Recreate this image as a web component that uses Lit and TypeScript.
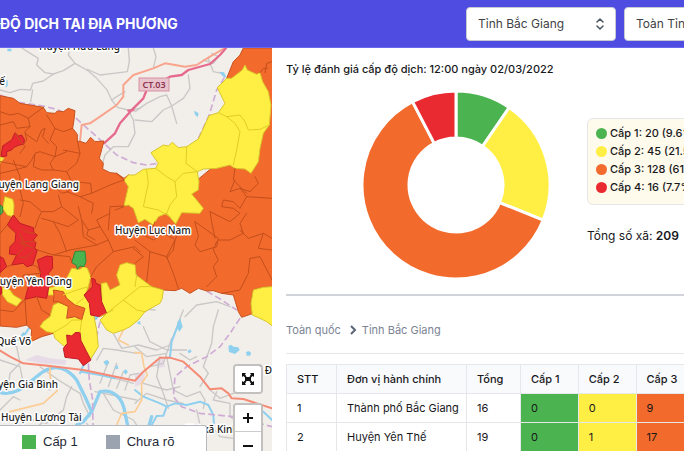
import { LitElement, html, svg, css } from "lit";
import { customElement, property } from "lit/decorators.js";

const GREEN = "#4bb350";
const YELLOW = "#ffef45";
const ORANGE = "#f26b2d";
const RED = "#ea2a31";

interface Level { name: string; count: number; share: string; color: string; }

const LEVELS: Level[] = [
  { name: "Cấp 1", count: 20, share: "9.6%", color: GREEN },
  { name: "Cấp 2", count: 45, share: "21.5%", color: YELLOW },
  { name: "Cấp 3", count: 128, share: "61.2%", color: ORANGE },
  { name: "Cấp 4", count: 16, share: "7.7%", color: RED },
];

const ROWS = [
  { name: "Thành phố Bắc Giang", total: 16, levels: [0, 0, 9, 7] },
  { name: "Huyện Yên Thế", total: 19, levels: [0, 1, 17, 1] },
];

/* Map geometry is kept at three units per pixel. */
const MINOR_ROADS = [
  "M40 295 M0 270 L30 278 L60 268 L92 270 L98 250 L130 243 L160 222 L190 212 L225 190 L265 213 L290 235 L320 268 L335 300 L352 322 L385 330 L420 325",
  "M160 222 L135 218 L110 195 L115 175 L65 144",
  "M98 270 L92 305 M225 190 L205 165 L210 144",
  "M385 144 L388 185 L382 215 L340 220 L300 225 L262 208",
  "M335 300 L350 290 L375 275 M385 330 L400 360 L405 400 L385 440 L340 440 L315 465 L308 490",
  "M405 360 L455 365 L490 330 L515 318 L550 295 L570 265 L565 225 M405 335 L440 310 L480 290 L500 285 L515 318 L530 370",
  "M460 144 L468 170 L460 205 M610 180 L640 190 L655 170 L635 160 M625 175 L640 215 L665 220",
  "M435 935 L445 928 L465 930 M555 950 L590 915 L650 905 L690 920",
  "M0 1010 L50 1040 L60 1090 L30 1120 L25 1160 M120 1100 L175 1140 L240 1180 L250 1210 L270 1250",
  "M215 1160 L200 1190 L190 1230 L140 1270 L100 1260",
  "M0 1080 L60 1100 L70 1150 L120 1145 L150 1170 M0 1230 L40 1190 L60 1200",
  "M290 1080 L310 1045 L350 1050 L410 1060 M300 1150 L325 1085 M325 1160 L350 1090 M350 1165 L370 1115 M375 1170 L390 1125 L415 1120 M310 1125 L400 1150 M285 1175 L410 1200",
  "M340 1000 L365 1045 L415 1035 L470 1050 L510 1035 L540 955 L550 930",
  "M430 980 L450 1025 L500 1050 L560 1050 M405 1040 L440 1070 L500 1060 M450 1100 L490 1090 L515 1015",
  "M540 1060 L570 1080 L590 1070 M655 930 L640 980 L635 1030 L610 1100 L625 1120 L600 1160",
  "M480 1070 L470 1130 L490 1180 L505 1225 M500 1070 L520 1170 L560 1190 L600 1175 L615 1200 L610 1225 M430 1150 L500 1170 L540 1160",
  "M405 1210 L440 1180 L500 1200 L550 1210 M630 1170 L660 1195 L700 1180 L740 1155 M650 1175 L640 1200 L690 1210 L690 1250 L720 1270",
  "M590 1230 L600 1275 L570 1290 L550 1353 M640 1285 L660 1310 L700 1315 M310 1180 L340 1230 L400 1260 L420 1290 L480 1300",
  "M260 1270 L300 1320 L360 1330 M30 1290 L90 1300 L130 1265",
];

const RIVERS_WIDE = [
  "M0 1178 C60 1190 90 1140 130 1115 S205 1108 230 1140 L255 1190 L275 1235 L250 1265 L230 1275",
  "M275 1235 L300 1175 C345 1165 370 1200 375 1240 L385 1285 L440 1300 L455 1250",
];

const RIVERS = [
  "M240 1120 L248 1100 L275 1070 L290 1040 L285 980 L278 950",
  "M455 1275 L470 1248 L490 1247 L500 1220 L525 1210 L560 1215 L600 1205 L625 1215 L640 1245 L642 1275",
  "M245 1115 L300 1125 L345 1135 M405 1170 L430 1190 L480 1210 L500 1220",
  "M510 1070 L515 1025 L540 960 M760 1225 L790 1235 L816 1260 M70 1010 L90 980 M55 1020 L70 1000",
];

const PONDS = [
  "M685 1038 l8 -4 l8 6 l14 2 l4 8 l-14 12 l-18 -6z", "M738 1056 l8 -3 l8 6 l-4 8 l-10 0z",
  "M563 1052 l8 -4 l4 8 l-10 4z", "M582 332 l8 4 l6 4 l-3 12 l-8 -8z M658 215 l14 2 l8 16 l-12 -4z",
  "M532 965 l10 -4 l6 20 l-10 14 l-6 -10z", "M310 1085 l12 -6 l6 10 l-10 8z M345 1100 l8 -4 l2 10 l-8 2z M370 1112 l8 -4 l6 8 l-8 8z",
  "M22 146 h12 v8 h-12z M15 245 l8 -6 v18 l-6 6z M410 970 l10 -8 l2 12z M270 950 l15 -12 l12 12 l-8 10 h-15z",
];

const AREAS: { color: string; d: string }[] = [
  {
    color: ORANGE,
    d: "M0 287 L40 295 L60 310 L130 322 L140 338 L165 340 L172 333 L190 335 L205 325 L225 332 L222 360 L218 385 L232 403 L232 423 L243 425 L258 430 L272 412 L285 425 L312 423 L298 475 L310 490 L308 507 L330 518 L350 520 L372 535 L385 525 L520 600 L700 450 L740 300 L680 235 L700 185 L720 165 L730 144 H820 V862 L790 862 L760 870 L753 910 L760 940 L725 952 L715 935 L700 885 L665 880 L640 872 L620 873 L595 865 L570 880 L545 865 L525 872 L490 870 L455 860 L420 835 L400 810 L360 855 L330 870 L300 900 L200 990 L160 1000 L125 1010 L92 1025 L95 990 L80 975 L50 982 L0 978 Z",
  },
  {
    color: YELLOW,
    d: "M385 525 L405 525 L430 508 L467 505 L475 490 L453 458 L490 435 L505 438 L517 427 L535 443 L560 440 L595 417 L610 385 L627 347 L655 338 L675 310 L652 263 L680 235 L695 235 L727 210 L735 195 L742 210 L770 223 L780 218 L788 245 L805 275 L813 315 L808 375 L790 400 L780 445 L775 485 L753 520 L735 507 L705 505 L690 495 L650 505 L610 507 L592 515 L597 545 L595 570 L575 582 L610 625 L600 640 L545 638 L527 672 L510 652 L500 640 L475 650 L460 675 L435 658 L415 668 L400 625 L385 615 L372 618 L385 560 L372 540 Z",
  },
  {
    color: YELLOW,
    d: "M145 865 L170 858 L195 845 L215 805 L240 808 L250 800 L262 805 L272 830 L265 860 L255 885 L280 910 L282 950 L290 990 L295 1040 L270 1080 L235 1060 L200 1045 L165 1015 L160 998 L140 995 L120 980 L130 965 L150 950 L160 915 L175 908 L200 915 L195 905 L190 885 L145 885 Z",
  },
  { color: ORANGE, d: "M160 870 L190 875 L200 895 L225 915 L255 925 L245 960 L225 950 L200 955 L205 920 L175 905 L160 905 L162 885 Z" },
  {
    color: YELLOW,
    d: "M305 850 L320 848 L330 870 L360 855 L350 825 L360 795 L380 788 L405 795 L408 825 L455 860 L490 870 L487 895 L480 910 L465 918 L435 935 L415 960 L390 980 L370 990 L340 1000 L320 990 L300 960 L320 940 L305 905 Z",
  },
  { color: YELLOW, d: "M760 870 L790 862 L820 860 V980 L800 965 L780 955 L757 945 L753 910 Z" },
  { color: YELLOW, d: "M15 590 L38 598 L42 615 L40 650 L22 645 L8 625 Z M0 470 L12 475 L0 490 Z" },
  { color: YELLOW, d: "M5 860 L30 870 L40 885 L65 900 L50 918 L22 905 L8 885 Z" },
  { color: GREEN, d: "M0 615 L8 620 L8 638 L0 645 Z" },
  { color: GREEN, d: "M225 755 L238 753 L255 754 L258 785 L252 800 L240 798 L232 808 L228 795 L215 788 Z" },
  { color: RED, d: "M45 398 L55 408 L65 405 L73 418 L72 432 L55 436 L42 442 L35 450 L20 455 L20 468 L3 470 L8 438 L35 420 Z" },
  { color: RED, d: "M40 645 L60 670 L100 683 L102 698 L112 705 L100 720 L108 728 L104 745 L112 750 L98 795 L80 800 L70 790 L35 795 L50 765 L28 762 L30 740 L45 725 L48 700 L22 675 Z" },
  { color: RED, d: "M112 780 L140 768 L157 770 L158 805 L145 820 L150 840 L140 895 L110 890 L75 898 L85 860 L120 845 L122 820 Z" },
  { color: RED, d: "M0 770 L10 775 L20 800 L0 818 Z M0 860 L5 862 L5 880 L0 885 Z" },
  { color: RED, d: "M275 835 L285 838 L288 850 L300 855 L305 905 L320 940 L300 950 L272 945 L268 910 L252 885 L278 860 Z" },
  { color: RED, d: "M200 1005 L215 1008 L225 998 L240 997 L243 1022 L260 1055 L273 1080 L250 1097 L235 1077 L195 1072 L190 1045 L202 1030 Z" },
];

const ORANGE_BORDERS = [
  "M0 335 L30 345 L55 340 L85 355 L130 322 M85 355 L90 380 L50 385 L40 365 L0 375 M90 380 L75 395 L80 420 L72 430",
  "M218 385 L190 395 L165 385 L140 345 M165 385 L150 420 L170 440 L165 470 L120 455 L105 460 L95 480 L80 500 L0 485",
  "M75 400 L110 425 L125 390 L135 385 L128 410 L145 430 M165 470 L150 490 L160 510 L125 510 L100 500 L105 465 M0 520 L45 510 L80 500",
  "M160 510 L200 515 L230 490 L240 460 L232 423 M200 515 L215 545 L205 575 L185 580 L170 565 M60 600 L90 605 L125 635 L115 655 L105 685",
  "M45 400 L75 440 L60 460 M40 480 L60 530 L58 560 M190 450 L215 455 L240 460 M165 470 L200 455",
  "M215 545 L272 550 L275 580 L240 590 L200 575 M240 590 L280 610 L275 640 M372 540 L330 555 L275 580 M350 520 L372 540",
  "M58 560 L70 610 L60 650 M125 635 L160 635 L185 620 L175 585 M185 620 L235 660 L205 680 L160 665 L125 655",
  "M160 665 L180 700 L200 755 M235 620 L245 660 L250 710 L290 735 L210 750 M210 750 L160 765",
  "M245 660 L265 690 L300 680 L325 720 L290 735 M325 720 L340 755 L290 800 L272 830 M325 690 L330 620 L372 618",
  "M300 680 L290 660 L330 640 M265 690 L260 705 L285 720 M340 755 L405 740 L420 755 M372 620 L345 630",
  "M112 750 L160 765 L210 770 L215 788 M0 700 L22 675 M35 795 L20 800 M98 795 L112 800 L122 820 L70 825 L60 860",
  "M405 720 L450 755 L445 800 L440 845 M450 755 L500 770 L525 720 L540 690 M500 770 L520 820 L535 865 M400 745 L430 770 L405 790",
  "M430 705 L460 720 L490 700 L520 715 M465 665 L455 690 L430 705 M525 720 L520 750 L500 775",
  "M585 665 L620 690 L655 715 L650 740 L600 755 L585 735 L595 710 Z M630 635 L635 665 L645 715 M650 725 L640 750 L655 780 L640 800 L650 830 L620 860",
  "M630 635 L660 650 L690 665 L720 640 L700 625 L665 620 L670 600 L700 605 L720 625 L740 590 L720 565 L690 575 L705 540",
  "M740 590 L816 595 M720 565 L750 575 L775 550 L765 530 M705 505 L700 540 L740 580 M655 720 L690 720 L730 700 L720 670 L740 640",
  "M720 690 L745 715 L790 700 L816 715 M750 775 L780 770 L816 840 M750 775 L745 820 L720 870 L665 880 M790 700 L775 745 L816 750",
  "M0 930 L40 935 L75 898 M75 898 L80 975 M110 890 L125 930 L150 945 M795 218 L800 190 L816 185 M780 218 L790 205 L802 205",
  "M105 725 L70 725 L60 700 M50 765 L75 740 L60 725 L100 745 M65 685 L75 695 L105 700 M60 770 L75 775 L98 755",
];

const YELLOW_BORDERS = [
  "M560 440 L558 490 L592 515 M655 338 L680 350 L705 370 L720 395 L710 450 L700 495 M680 350 L720 345 L735 365 L745 390 L780 388 L808 375",
  "M467 505 L500 530 L525 545 L550 520 L592 515 M440 510 L445 550 L430 620 L475 630 L510 650 M525 545 L530 590 L510 615 L500 640",
  "M190 885 L230 870 L265 860 M225 915 L250 895 M160 998 L200 975 L215 960 L245 960 L240 997 M320 940 L370 900 L420 860 L455 860 M370 900 L410 930 L435 935 M410 825 L405 860 M300 950 L340 930",
];

const MAP_LABELS = [
  { text: "Huyện Hữu Lũng", x: 39, y: 50, anchor: "start" },
  { text: "Huyện Yên Thế", x: 5, y: 85, anchor: "end" },
  { text: "Huyện Lạng Giang", x: 79, y: 188, anchor: "end" },
  { text: "Huyện Lục Nam", x: 115, y: 234, anchor: "start" },
  { text: "Huyện Yên Dũng", x: 72, y: 285, anchor: "end" },
  { text: "Thị xã Quế Võ", x: 31, y: 345, anchor: "end" },
  { text: "Huyện Gia Bình", x: 58, y: 388, anchor: "end" },
  { text: "Huyện Lương Tài", x: 1, y: 421, anchor: "start" },
  { text: "Thị xã Kinh", x: 186, y: 433, anchor: "start" },
  { text: "xã Đ", x: 272, y: 374, anchor: "end" },
];

@customElement("region-map")
export class RegionMap extends LitElement {
  static styles = css`
    :host { display: block; position: relative; overflow: hidden; background: #f2efeb; }
    .map { position: absolute; inset: 0; width: 100%; height: 100%; display: block; }
    .line { fill: none; stroke-linejoin: round; stroke-linecap: round; }
    .minor { stroke: #c9c8c6; stroke-width: 4; }
    .river { stroke: #8fd0ef; stroke-width: 6; }
    .wide { stroke: #8fd0ef; stroke-width: 10; }
    .pond { fill: #8fd0ef; }
    .boundary { stroke: #cfabd6; stroke-width: 5; stroke-dasharray: 20 10; stroke-linecap: butt; }
    .primary { stroke: #f9a48c; stroke-width: 6; }
    .trunk { stroke: #f58a75; stroke-width: 6; }
    .secondary { stroke: #fbcd95; stroke-width: 5; }
    .motorway { stroke: #e66a8c; stroke-width: 7; }
    .town { fill: #e6dbe6; }
    .area { stroke-width: 3; stroke-linejoin: round; }
    .on-orange { stroke: #c34d1b; stroke-width: 3; }
    .on-yellow { stroke: #dfcb25; stroke-width: 3; }
    .shield { fill: #e9c4cd; stroke: #d792a4; stroke-width: 1; }
    .shield-text { font: 600 9px "Noto Sans", sans-serif; fill: #8c3350; }
    .label {
      font: 500 10px "Noto Sans", sans-serif; fill: #1c1c1c;
      stroke: #fff; stroke-width: 3px; stroke-linejoin: round; paint-order: stroke;
    }
    .legend {
      position: absolute; left: 0; bottom: 0; width: 207px; box-sizing: border-box;
      display: flex; gap: 28px; padding: 8px 0 1px 22px; background: #fff;
      border-top: 1px solid #b5b8c0; border-right: 1px solid #b5b8c0; border-top-right-radius: 3px;
      font: 13px/16px "Liberation Sans", sans-serif; color: #1f2937;
    }
    .entry { display: flex; align-items: center; gap: 7px; }
    .swatch { width: 14px; height: 14px; }
    .cap1 { background: #4bb350; }
    .unknown { background: #9ca3b0; }
    .controls { position: absolute; right: 9px; bottom: -10px; display: grid; gap: 9px; }
    .box { border: 2px solid #c3c1bf; border-radius: 4px; overflow: hidden; background: #fff; }
    button {
      display: grid; place-items: center; width: 26px; height: 26px; padding: 0;
      border: 0; background: #fff; color: #111;
    }
    button + button { border-top: 1px solid #ccc; height: 28px; }
  `;

  private border(color: string) {
    return color === ORANGE ? "#c8501e" : color === YELLOW ? "#d8c52a" : color === RED ? "#c01c26" : "#35853a";
  }

  render() {
    return html`
      <svg class="map" viewBox="0 48 272 403" preserveAspectRatio="xMidYMid slice" role="img" aria-label="Bản đồ cấp độ dịch">
        <g transform="scale(0.333333)">
          <path class="town" d="M75 1080 L110 1065 L150 1075 L200 1080 L195 1095 L120 1090 Z M465 1080 L490 1075 L495 1100 L470 1105 Z M420 1115 L435 1120 L430 1150 L405 1160 V1125 Z" />
          ${MINOR_ROADS.map((d) => svg`<path class="line minor" d=${d} />`)}
          ${RIVERS_WIDE.map((d) => svg`<path class="line wide" d=${d} />`)}
          ${RIVERS.map((d) => svg`<path class="line river" d=${d} />`)}
          ${PONDS.map((d) => svg`<path class="pond" d=${d} />`)}
          <path class="line boundary" d="M0 285 L60 308 L130 318 L170 328 L225 352 L290 410 L350 465 L400 488 L440 495 L475 490 M595 415 L627 347 L650 270 L678 225 M620 873 L665 900 L710 930" />
          <path class="line boundary" d="M720 955 L690 1000 L660 1040 L620 1070 L560 1100 L525 1130 L520 1190 L545 1220 L600 1240 L700 1250 L816 1280 M760 940 L816 960 M300 965 L288 1020 M265 1090 L268 1140 L278 1200 L280 1353" />
          <path class="line secondary" d="M150 1100 L150 1130 L172 1172 L130 1210 L30 1235 M430 930 L370 990 L355 1020 L385 1035 M405 1057 L425 1060 L432 1100 L442 1125 L425 1150 L425 1200 L405 1235 L365 1240 L350 1275" />
          <path class="line primary" d="M240 423 L245 375 L270 370 L300 350 L350 315 L370 290 L370 255 L400 225 L460 205 L495 190 L555 200 L590 195 L630 170 L675 144" />
          <path class="line motorway" d="M312 430 L345 400 L360 370 L400 325 L430 295 L440 270 L510 230 L545 225 L565 210 L630 192 L660 165 L678 144 M385 332 L400 330" />
          <path class="line trunk" d="M0 1052 L30 1070 L70 1090 L150 1098 L250 1110 L405 1142 L430 1115 L480 1073 L510 1073 L550 1085 L600 1130 L630 1168 L665 1165 L685 1180 L695 1195 L730 1197 L816 1225" />
          ${AREAS.map((a) => svg`<path class="area" d=${a.d} fill=${a.color} stroke=${this.border(a.color)} />`)}
          ${ORANGE_BORDERS.map((d) => svg`<path class="line on-orange" d=${d} />`)}
          ${YELLOW_BORDERS.map((d) => svg`<path class="line on-yellow" d=${d} />`)}
        </g>
        <rect class="shield" x="139" y="78" width="30" height="13" />
        <text class="shield-text" x="154" y="88" text-anchor="middle">CT.03</text>
        ${MAP_LABELS.map((l) => svg`<text class="label" x=${l.x} y=${l.y} text-anchor=${l.anchor}>${l.text}</text>`)}
      </svg>
      <div class="legend">
        <span class="entry"><i class="swatch cap1"></i>Cấp 1</span>
        <span class="entry"><i class="swatch unknown"></i>Chưa rõ</span>
      </div>
      <div class="controls">
        <div class="box">
          <button aria-label="Toàn màn hình">
            <svg width="14" height="14" viewBox="0 0 14 14" fill="currentColor">
              <path d="M4 5h6v4H4z M1 1h4L4 2.500 5.500 4.500 4 5.500 2.500 4 1 5z M13 1v4l-1.500-1L10 5.500 8.500 4.500 10 2.500 9 1z M1 13V9l1.500 1L4 8.500 5.500 9.500 4 11.500 5 13z M13 13H9l1-1.500L8.500 9.500 10 8.500l1.500 1.500L13 9z" />
            </svg>
          </button>
        </div>
        <div class="box">
          <button aria-label="Phóng to">
            <svg width="12" height="12" viewBox="0 0 12 12" fill="currentColor"><path d="M5 1h2v4h4v2H7v4H5V7H1V5h4z" /></svg>
          </button>
          <button aria-label="Thu nhỏ">
            <svg width="12" height="12" viewBox="0 0 12 12" fill="currentColor"><path d="M1 5h10v2H1z" /></svg>
          </button>
        </div>
      </div>
    `;
  }
}

@customElement("level-donut")
export class LevelDonut extends LitElement {
  @property({ attribute: false }) levels: Level[] = [];

  static styles = css`
    :host { display: block; flex: none; }
    svg { display: block; width: 188px; height: 188px; }
    path { stroke: #fff; stroke-width: 3; stroke-linejoin: round; }
  `;

  render() {
    const total = this.levels.reduce((sum, l) => sum + l.count, 0);
    const at = (share: number, r: number) => {
      const a = share * 2 * Math.PI;
      return `${(r * Math.sin(a)).toFixed(2)} ${(-r * Math.cos(a)).toFixed(2)}`;
    };
    let from = 0;
    return html`<svg viewBox="-94 -94 188 188" role="img" aria-label="Tỷ lệ cấp độ dịch">
      ${this.levels.map((l) => {
        const start = from / total;
        from += l.count;
        const end = from / total;
        const large = end - start > 0.5 ? 1 : 0;
        return svg`<path fill=${l.color} d="M${at(start, 94)} A94 94 0 ${large} 1 ${at(end, 94)} L${at(end, 47)} A47 47 0 ${large} 0 ${at(start, 47)} Z" />`;
      })}
    </svg>`;
  }
}

@customElement("app-root")
export class AppRoot extends LitElement {
  static styles = css`
    :host {
      display: flex; flex-direction: column; height: 100vh; overflow: hidden;
      background: #fff; color: #18181b; font: 12px/20px Inter, sans-serif;
    }
    header {
      flex: none; display: flex; align-items: center; justify-content: space-between;
      height: 47px; background: #4f4ce1; border-bottom: 1px solid #6b68ee;
    }
    h1 { margin: 0; font-size: 14px; line-height: 20px; font-weight: 700; color: #fff; white-space: nowrap; }
    .filters { display: flex; gap: 8px; margin-right: -90px; }
    .picker { position: relative; display: flex; align-items: center; }
    select {
      appearance: none; width: 150px; height: 34px; padding: 0 32px 0 11px;
      border: 1px solid #c7cad1; border-radius: 4px; background: #fff; color: #3f3f46;
      font: 12px/20px Inter, sans-serif;
    }
    .updown { position: absolute; right: 12px; pointer-events: none; }
    .content {
      flex: 1; min-height: 0; display: grid;
      grid-template-columns: minmax(0, 272fr) minmax(0, 412fr);
    }
    main { overflow: hidden; padding: 14px 0 0 14px; }
    h2 { margin: 0; font-size: 11px; line-height: 14px; font-weight: 500; white-space: nowrap; }
    .summary { display: flex; gap: 37px; padding: 15px 0 15px 76px; border-bottom: 2px solid #d1d5db; }
    .figures { flex: none; padding-top: 27px; }
    .levels {
      margin: 0; padding: 5px 8px 7px; width: 118px; height: 73px; list-style: none;
      border: 1px solid #e5e7eb; border-radius: 6px; background: #fefaec;
      font-size: 11px; line-height: 18px; font-weight: 500; white-space: nowrap;
    }
    .levels li { display: flex; align-items: center; gap: 3px; }
    .dot { width: 11px; height: 11px; border-radius: 50%; }
    .total { margin: 19px 0 0; line-height: 24px; white-space: nowrap; }
    .total b { font-weight: 600; }
    nav {
      display: flex; align-items: center; gap: 5px; padding: 24px 0 13px;
      border-bottom: 1px solid #e5e7eb; font-size: 11px; white-space: nowrap;
    }
    nav a { color: #7c8494; text-decoration: none; }
    nav svg { margin-left: 3px; }
    table {
      width: 466px; margin-top: 10px; table-layout: fixed; border-collapse: collapse;
      font-size: 11px; line-height: 18px; text-align: left; white-space: nowrap;
    }
    th, td { box-sizing: border-box; height: 29px; padding: 0 0 0 10px; border: 1px solid #e5e7eb; font-weight: 400; }
    th { background: #f9fafb; font-weight: 500; }
    .c-index { width: 50px; }
    .c-name { width: 130px; }
    .c-total { width: 54px; }
    .l0 { background: #4bb350; }
    .l1 { background: #ffef45; }
    .l2 { background: #f26b2d; }
    .l3 { background: #ea2a31; }
  `;

  private picker(label: string, option: string) {
    return html`<div class="picker">
      <select aria-label=${label}><option>${option}</option></select>
      <svg class="updown" width="8" height="12" viewBox="0 0 8 12" fill="none" stroke="#4b5563" stroke-width="1.500" stroke-linecap="round" stroke-linejoin="round">
        <path d="M1 4 L4 1 L7 4 M1 8 L4 11 L7 8" />
      </svg>
    </div>`;
  }

  render() {
    return html`
      <header>
        <h1>ĐỘ DỊCH TẠI ĐỊA PHƯƠNG</h1>
        <div class="filters">
          ${this.picker("Tỉnh", "Tỉnh Bắc Giang")}
          ${this.picker("Huyện", "Toàn Tỉnh")}
        </div>
      </header>
      <div class="content">
        <region-map></region-map>
        <main>
          <h2>Tỷ lệ đánh giá cấp độ dịch: 12:00 ngày 02/03/2022</h2>
          <section class="summary">
            <level-donut .levels=${LEVELS}></level-donut>
            <div class="figures">
              <ul class="levels">
                ${LEVELS.map((l, i) => html`<li><i class="dot l${i}"></i>${l.name}: ${l.count} (${l.share})</li>`)}
              </ul>
              <p class="total">Tổng số xã: <b>209</b></p>
            </div>
          </section>
          <nav aria-label="Đơn vị">
            <a href="#country">Toàn quốc</a>
            <svg width="8" height="10" viewBox="0 0 8 10" fill="none" stroke="#5b6474" stroke-width="2"><path d="M2 1 L6 5 L2 9" /></svg>
            <a href="#province">Tỉnh Bắc Giang</a>
          </nav>
          <table>
            <thead>
              <tr>
                <th class="c-index">STT</th>
                <th class="c-name">Đơn vị hành chính</th>
                <th class="c-total">Tổng</th>
                ${LEVELS.map((l) => html`<th>${l.name}</th>`)}
              </tr>
            </thead>
            <tbody>
              ${ROWS.map((r, i) => html`<tr>
                <td>${i + 1}</td><td>${r.name}</td><td>${r.total}</td>
                ${r.levels.map((n, k) => html`<td class="l${k}">${n}</td>`)}
              </tr>`)}
            </tbody>
          </table>
        </main>
      </div>
    `;
  }
}
